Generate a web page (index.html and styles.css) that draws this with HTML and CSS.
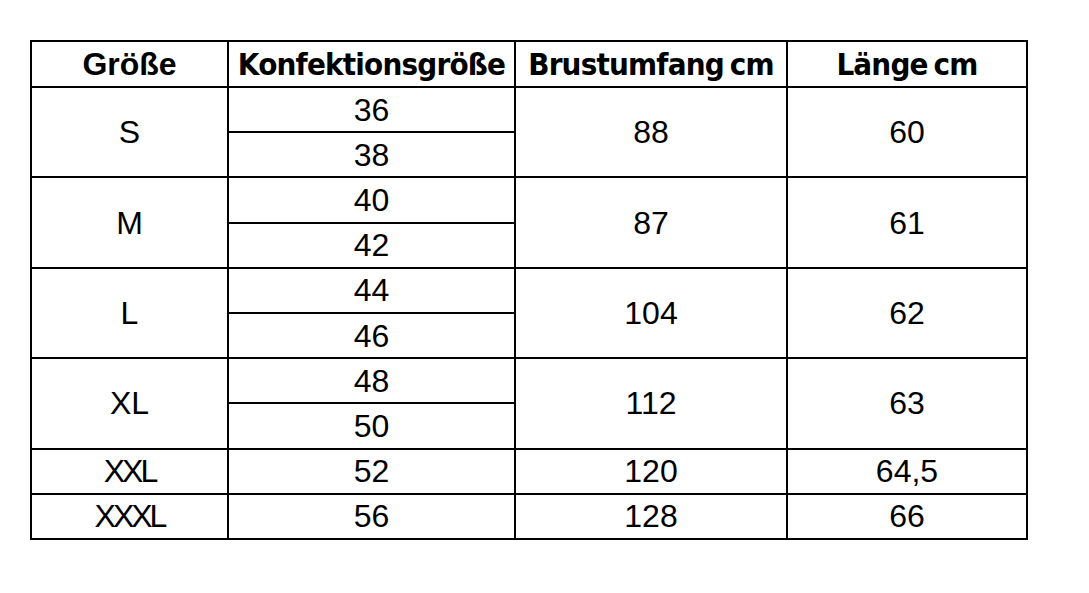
FILE: index.html
```html
<!DOCTYPE html>
<html lang="de">
<head>
<meta charset="utf-8">
<title>Größentabelle</title>
<link rel="stylesheet" href="styles.css">
</head>
<body>
<table class="sizes">
  <colgroup>
    <col class="c1"><col class="c2"><col class="c3"><col class="c4">
  </colgroup>
  <thead>
    <tr class="head">
      <th class="h-arial">Größe</th>
      <th class="h-cond">Konfektionsgröße</th>
      <th class="h-cond">Brustumfang cm</th>
      <th class="h-cond">Länge cm</th>
    </tr>
  </thead>
  <tbody>
    <tr class="sub-top"><td rowspan="2">S</td><td>36</td><td rowspan="2">88</td><td rowspan="2">60</td></tr>
    <tr class="sub-bot"><td>38</td></tr>
    <tr class="sub-top"><td rowspan="2">M</td><td>40</td><td rowspan="2">87</td><td rowspan="2">61</td></tr>
    <tr class="sub-bot"><td>42</td></tr>
    <tr class="sub-top"><td rowspan="2">L</td><td>44</td><td rowspan="2">104</td><td rowspan="2">62</td></tr>
    <tr class="sub-bot"><td>46</td></tr>
    <tr class="sub-top"><td rowspan="2">XL</td><td>48</td><td rowspan="2">112</td><td rowspan="2">63</td></tr>
    <tr class="sub-bot"><td>50</td></tr>
    <tr><td class="tight">XXL</td><td>52</td><td>120</td><td>64,5</td></tr>
    <tr><td class="tight">XXXL</td><td>56</td><td>128</td><td>66</td></tr>
  </tbody>
</table>
</body>
</html>
```

FILE: styles.css
```css
html, body {
  margin: 0;
  padding: 0;
  background: #fff;
}
body {
  padding: 40px 0 0 30px;
}
.sizes {
  border-collapse: collapse;
  table-layout: fixed;
  width: 996px;
  border: 2px solid #000;
  font-family: "Liberation Sans", Arial, sans-serif;
  color: #000;
}
.c1 { width: 197px; }
.c2 { width: 287px; }
.c3 { width: 272px; }
.c4 { width: 240px; }
.sizes th,
.sizes td {
  border: 2px solid #000;
  padding: 0;
  text-align: center;
  vertical-align: middle;
  line-height: 1;
}
.sizes tr {
  height: 45.2px;
}
.sizes tr.head {
  height: 46px;
}
.sizes td {
  font-size: 32px;
  font-weight: 400;
}
.h-arial {
  font-family: "Liberation Sans", Arial, sans-serif;
  font-size: 32px;
  font-weight: 700;
}
.h-cond {
  font-family: "DejaVu Sans Condensed", "DejaVu Sans", sans-serif;
  font-stretch: condensed;
  font-size: 31px;
  font-weight: 700;
  letter-spacing: -0.8px;
  word-spacing: -3px;
}
.tight {
  letter-spacing: -3px;
}
```
